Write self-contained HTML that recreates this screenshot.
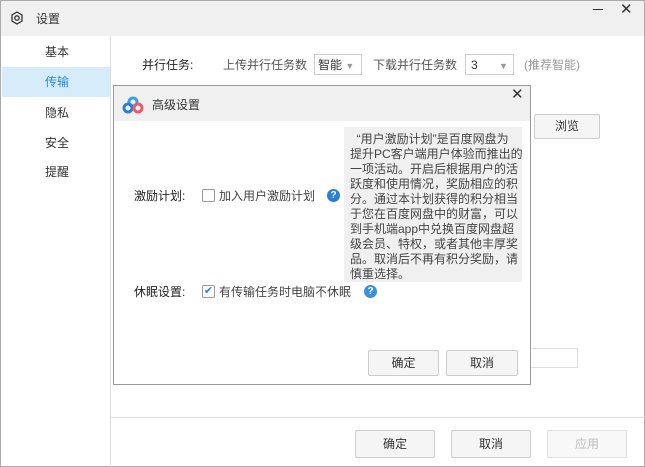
<!DOCTYPE html><html><head><meta charset="utf-8"><style>
*{margin:0;padding:0;box-sizing:border-box}
body{width:645px;height:467px;position:relative;overflow:hidden;background:#fff;font-family:"Liberation Sans","Noto Sans CJK SC",sans-serif;font-size:12px;color:#333}
.a{position:absolute;white-space:nowrap;line-height:16px}
.btn{position:absolute;border:1px solid #ccc;background:#f5f5f5;border-radius:2px;text-align:center;font-size:12px;color:#333}
</style></head><body>
<div class="a" style="left:0;top:0;width:645px;height:467px;border:1px solid #aaa"></div>
<div class="a" style="left:1px;top:1px;width:643px;height:35px;background:#f0f0f0"></div>
<svg class="a" style="left:10px;top:11px" width="14" height="14" viewBox="0 0 14 14"><path d="M7 1 L12 4 L12 10 L7 13 L2 10 L2 4Z" fill="none" stroke="#333" stroke-width="1.3"/><circle cx="7" cy="7" r="2.2" fill="none" stroke="#333" stroke-width="1.3"/></svg>
<div class="a" style="left:36px;top:11px">设置</div>
<div class="a" style="left:593px;top:9px;width:10px;height:1px;background:#333"></div>
<div class="a" style="left:620px;top:2px;font-size:15px">✕</div>
<div class="a" style="left:110px;top:36px;width:1px;height:431px;background:#ddd"></div>
<div class="a" style="left:2px;top:67px;width:108px;height:30px;background:#d6ecfa"></div>
<div class="a" style="left:45px;top:44px">基本</div>
<div class="a" style="left:45px;top:74px;color:#2a8ad8">传输</div>
<div class="a" style="left:45px;top:105px">隐私</div>
<div class="a" style="left:45px;top:135px">安全</div>
<div class="a" style="left:45px;top:164px">提醒</div>
<div class="a" style="left:142px;top:57px;color:#222">并行任务:</div>
<div class="a" style="left:223px;top:57px;color:#555">上传并行任务数</div>
<div class="a" style="left:314px;top:54px;width:48px;height:21px;border:1px solid #ccc;padding:2px 3px">智能 <span style="color:#999;font-size:9px">▼</span></div>
<div class="a" style="left:373px;top:57px;color:#555">下载并行任务数</div>
<div class="a" style="left:465px;top:54px;width:49px;height:21px;border:1px solid #ccc;padding:2px 5px">3 <span style="color:#999;font-size:9px;margin-left:18px">▼</span></div>
<div class="a" style="left:524px;top:57px;color:#999">(推荐智能)</div>
<div class="btn" style="left:534px;top:114px;width:66px;height:25px;line-height:23px">浏览</div>
<div class="a" style="left:528px;top:348px;width:50px;height:20px;border:1px solid #ddd"></div>
<div class="a" style="left:111px;top:417px;width:534px;height:1px;background:#ddd"></div>
<div class="btn" style="left:355px;top:430px;width:80px;height:28px;line-height:26px">确定</div>
<div class="btn" style="left:451px;top:430px;width:80px;height:28px;line-height:26px">取消</div>
<div class="btn" style="left:547px;top:430px;width:80px;height:28px;line-height:26px;color:#bbb;border-color:#e0e0e0;background:#f8f8f8">应用</div>
<div class="a" style="left:113px;top:85px;width:418px;height:300px;border:1px solid #999;background:#fff"></div>
<div class="a" style="left:114px;top:86px;width:416px;height:35px;background:#f0f0f0"></div>
<svg class="a" style="left:122px;top:96px" width="22" height="18" viewBox="0 0 22 18"><circle cx="11" cy="6" r="4" fill="none" stroke="#3aa0e6" stroke-width="3"/><circle cx="6" cy="12" r="4" fill="none" stroke="#2a7fd4" stroke-width="3"/><circle cx="16" cy="12" r="4" fill="none" stroke="#e85a6a" stroke-width="3"/></svg>
<div class="a" style="left:152px;top:97px">高级设置</div>
<div class="a" style="left:511px;top:87px;font-size:15px">✕</div>
<div class="a" style="left:344px;top:127px;width:178px;height:155px;background:#f0f0f0"></div>
<div class="a" style="left:350px;top:132px;font-size:12px;line-height:15px;color:#444">&nbsp;&nbsp;“用户激励计划”是百度网盘为<br>提升PC客户端用户体验而推出的<br>一项活动。开启后根据用户的活<br>跃度和使用情况，奖励相应的积<br>分。通过本计划获得的积分相当<br>于您在百度网盘中的财富，可以<br>到手机端app中兑换百度网盘超<br>级会员、特权，或者其他丰厚奖<br>品。取消后不再有积分奖励，请<br>慎重选择。</div>
<div class="a" style="left:134px;top:188px;color:#222">激励计划:</div>
<div class="a" style="left:202px;top:189px;width:13px;height:13px;border:1px solid #999;border-radius:2px;background:#fff"></div>
<div class="a" style="left:219px;top:188px;color:#444">加入用户激励计划</div>
<div class="a" style="left:327px;top:189px;width:13px;height:13px;border-radius:50%;background:#2a7fd4;color:#fff;font-size:10px;line-height:13px;text-align:center;font-weight:bold">?</div>
<div class="a" style="left:134px;top:284px;color:#222">休眠设置:</div>
<div class="a" style="left:202px;top:285px;width:13px;height:13px;border:1px solid #999;border-radius:2px;background:#fff;color:#2a7fd4;font-size:11px;line-height:11px;text-align:center">✔</div>
<div class="a" style="left:219px;top:284px;color:#444">有传输任务时电脑不休眠</div>
<div class="a" style="left:364px;top:285px;width:13px;height:13px;border-radius:50%;background:#3a8fe0;color:#fff;font-size:10px;line-height:13px;text-align:center;font-weight:bold">?</div>
<div class="btn" style="left:368px;top:350px;width:71px;height:26px;line-height:24px">确定</div>
<div class="btn" style="left:446px;top:350px;width:72px;height:26px;line-height:24px">取消</div>
</body></html>
